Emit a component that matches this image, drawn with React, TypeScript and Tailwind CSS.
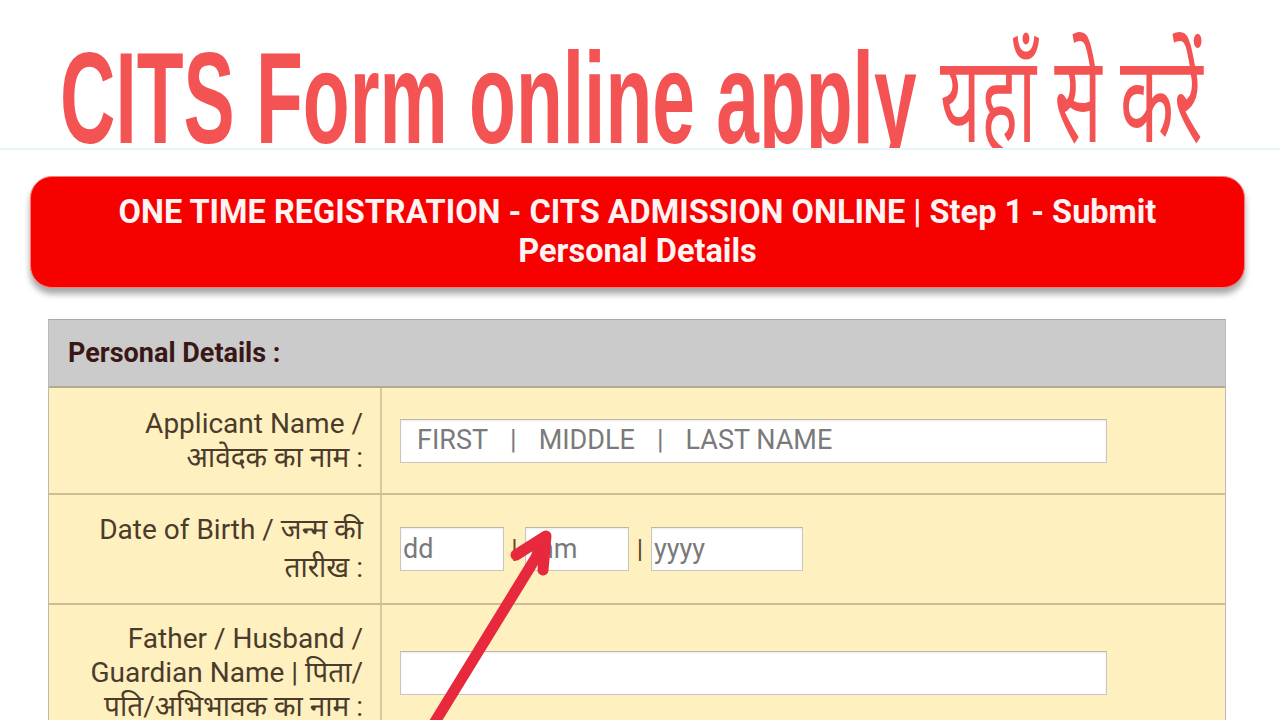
import React from "react";

const labelCls =
  "text-right pr-[17px] text-[28px] leading-[34px] text-[#4a3b2b] border-r-2 border-[#d6c89f]";

function Box({ w, children, pad = "pl-[16px]" }: { w: string; children?: React.ReactNode; pad?: string }) {
  return (
    <div
      className={`${w} h-[44px] bg-white border border-[#c9c6bd] border-t-[#b9b6ad] shadow-[inset_0_1px_2px_rgba(0,0,0,0.08)] flex items-center ${pad} text-[27px] text-[#7a7a7a] whitespace-nowrap`}
    >
      {children}
    </div>
  );
}

export default function App() {
  return (
    <div
      className="w-[1280px] h-[720px] overflow-hidden bg-white relative"
      style={{ fontFamily: "Roboto, 'Noto Sans', sans-serif" }}
    >
      {/* Title */}
      <div className="h-[150px] border-b-2 border-[#e2f6f9] overflow-hidden flex items-start pl-[60px] pt-[33px]">
        <div className="w-[870px] shrink-0">
          <div
            className="inline-block origin-left scale-x-[0.59] whitespace-nowrap text-[130px] leading-none font-bold text-[#f45353]"
            style={{ fontFamily: "'Liberation Sans', Arial, sans-serif" }}
          >
            CITS Form online apply
          </div>
        </div>
        <div className="w-[280px] shrink-0 ml-[10px] mt-[1px]">
          <div
            className="inline-block origin-left scale-x-[0.575] whitespace-nowrap text-[122px] leading-none text-[#f45353]"
            style={{ fontFamily: "'Noto Sans', 'Noto Sans Devanagari', sans-serif" }}
          >
            यहाँ से करें
          </div>
        </div>
      </div>

      {/* Banner */}
      <div className="ml-[30px] mr-[35px] mt-[26px] h-[112px] rounded-[22px] bg-[#f70000] border border-[#ff7b7b] shadow-[0_6px_6px_rgba(0,0,0,0.35)] flex items-center justify-center text-center px-[40px]">
        <div className="text-[32.5px] leading-[39px] font-bold text-[#fff4f4] whitespace-nowrap">
          ONE TIME REGISTRATION - CITS ADMISSION ONLINE | Step 1 - Submit
          <br />
          Personal Details
        </div>
      </div>

      {/* Form table */}
      <div className="ml-[48px] mr-[54px] mt-[31px] border border-[#bdbab0] border-t-[#a9a9a9]">
        <div className="h-[68px] bg-[#cbcbcb] flex items-center pl-[19px] border-b-2 border-[#b3aa90]">
          <span className="text-[27px] font-bold text-[#3a1717]">Personal Details :</span>
        </div>

        {/* Row 1 */}
        <div className="grid grid-cols-[333px_1fr] bg-[#fef0bf] border-b-2 border-[#cdbd92]">
          <div className={`${labelCls} h-[105px] flex flex-col justify-center`}>
            <div>Applicant Name /</div>
            <div>आवेदक का नाम :</div>
          </div>
          <div className="flex items-center pl-[18px]">
            <Box w="w-[707px]">
              <span className="flex gap-[22px]">
                <span>FIRST</span>
                <span>|</span>
                <span>MIDDLE</span>
                <span>|</span>
                <span>LAST NAME</span>
              </span>
            </Box>
          </div>
        </div>

        {/* Row 2 */}
        <div className="grid grid-cols-[333px_1fr] bg-[#fef0bf] border-b-2 border-[#cdbd92]">
          <div className={`${labelCls} h-[108px] flex flex-col justify-center leading-[38px]`}>
            <div>Date of Birth / जन्म की</div>
            <div>तारीख :</div>
          </div>
          <div className="flex items-center pl-[18px] text-[26px] text-[#5a4a2a]">
            <Box w="w-[104px]" pad="pl-[2px]">dd</Box>
            <span className="w-[21px] text-center">|</span>
            <Box w="w-[104px]" pad="pl-[4px]">mm</Box>
            <span className="w-[22px] text-center">|</span>
            <Box w="w-[152px]" pad="pl-[2px]">yyyy</Box>
          </div>
        </div>

        {/* Row 3 */}
        <div className="grid grid-cols-[333px_1fr] bg-[#fef0bf]">
          <div className={`${labelCls} py-[17px]`}>
            <div>Father / Husband /</div>
            <div>Guardian Name | पिता/</div>
            <div>पति/अभिभावक का नाम :</div>
          </div>
          <div className="flex items-center pl-[18px]">
            <Box w="w-[707px]" />
          </div>
        </div>
      </div>

      {/* Arrow overlay */}
      <svg className="absolute inset-0 pointer-events-none" width="1280" height="720" viewBox="0 0 1280 720">
        <line x1="430" y1="730" x2="543" y2="546" stroke="#e8283c" strokeWidth="11" strokeLinecap="round" />
        <polyline
          points="516,555 546,536 543,570"
          fill="none"
          stroke="#e8283c"
          strokeWidth="11"
          strokeLinecap="round"
          strokeLinejoin="round"
        />
      </svg>
    </div>
  );
}
